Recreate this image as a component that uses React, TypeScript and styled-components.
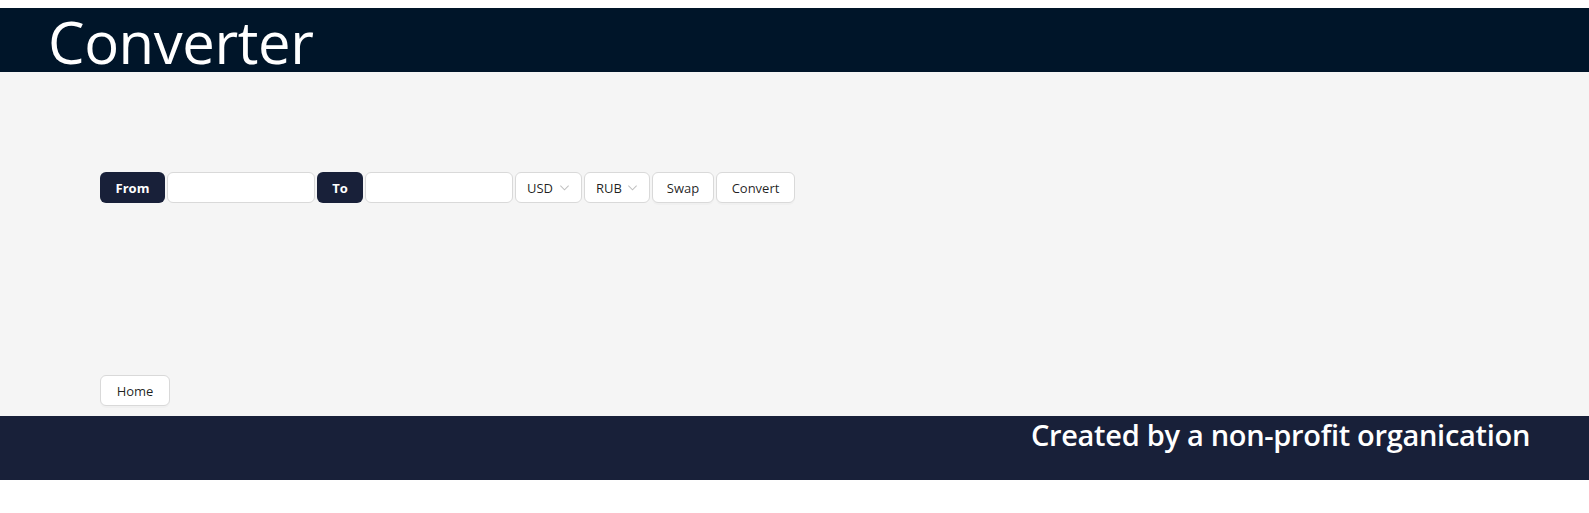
import React from "react";
import styled, { createGlobalStyle } from "styled-components";

const Global = createGlobalStyle`
  html, body { margin: 0; padding: 0; background: #ffffff; }
  body { font-family: "Open Sans", "Noto Sans", sans-serif; }
  * { box-sizing: border-box; }
`;

const Page = styled.div`
  padding-top: 8px;
  display: flex;
  flex-direction: column;
`;

const Header = styled.header`
  height: 64px;
  background: #001529;
  padding: 4px 0 0 48px;
  display: flex;
  align-items: center;
`;

const Title = styled.h1`
  margin: 0;
  color: #ffffff;
  font-weight: 400;
  font-size: 58px;
  line-height: 60px;
  letter-spacing: -0.4px;
`;

const Main = styled.main`
  height: 344px;
  background: #f5f5f5;
  padding: 100px 100px 10px;
  display: flex;
  flex-direction: column;
  justify-content: space-between;
  align-items: flex-start;
`;

const Row = styled.div`
  display: flex;
  gap: 2px;
  align-items: stretch;
  height: 31px;
`;

const Label = styled.span<{ $w: number }>`
  width: ${(p) => p.$w}px;
  background: #182039;
  color: #ffffff;
  border-radius: 6px;
  font-size: 13px;
  font-weight: 700;
  display: flex;
  align-items: center;
  justify-content: center;
`;

const Input = styled.input`
  width: 148px;
  border: 1px solid #d9d9d9;
  border-radius: 6px;
  background: #ffffff;
  padding: 0 10px;
  font-family: inherit;
  font-size: 14px;
  outline: none;
`;

const Select = styled.div<{ $w: number }>`
  width: ${(p) => p.$w}px;
  border: 1px solid #d9d9d9;
  border-radius: 6px;
  background: #ffffff;
  padding: 0 11px;
  display: flex;
  align-items: center;
  justify-content: space-between;
  font-size: 13px;
  color: rgba(0, 0, 0, 0.88);
`;

const Button = styled.button<{ $w: number; $h?: number }>`
  width: ${(p) => p.$w}px;
  height: ${(p) => p.$h ?? 31}px;
  border: 1px solid #d9d9d9;
  border-radius: 6px;
  background: #ffffff;
  box-shadow: 0 2px 0 rgba(0, 0, 0, 0.02);
  font-family: inherit;
  font-size: 13px;
  color: rgba(0, 0, 0, 0.88);
  padding: 0;
  cursor: pointer;
`;

const Footer = styled.footer`
  height: 64px;
  background: #182039;
  padding: 1px 59px 0 0;
  display: flex;
  justify-content: flex-end;
  align-items: flex-start;
`;

const FooterText = styled.h2`
  margin: 0;
  color: #ffffff;
  font-size: 29px;
  font-weight: 600;
  line-height: 36px;
  letter-spacing: -0.3px;
`;

const Chevron = () => (
  <svg width="11" height="11" viewBox="0 0 12 12" fill="none">
    <path d="M1.5 4l4.5 4.5L10.5 4" stroke="rgba(0,0,0,0.25)" strokeWidth="1.1" />
  </svg>
);

export default function App() {
  return (
    <Page>
      <Global />
      <Header>
        <Title>Converter</Title>
      </Header>
      <Main>
        <Row>
          <Label $w={65}>From</Label>
          <Input />
          <Label $w={46}>To</Label>
          <Input />
          <Select $w={67}>
            USD <Chevron />
          </Select>
          <Select $w={66}>
            RUB <Chevron />
          </Select>
          <Button $w={62}>Swap</Button>
          <Button $w={79}>Convert</Button>
        </Row>
        <Button $w={70} $h={31}>Home</Button>
      </Main>
      <Footer>
        <FooterText>Created by a non-profit organication</FooterText>
      </Footer>
    </Page>
  );
}
